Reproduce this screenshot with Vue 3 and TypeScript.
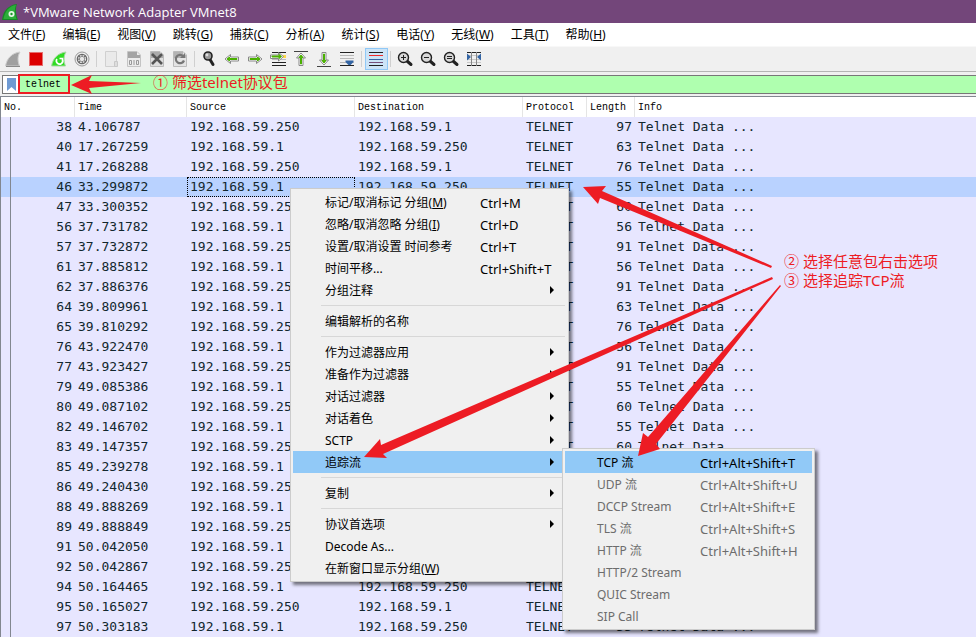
<script setup lang="ts">
interface Packet {
  no: number
  time: string
  fromGuest: boolean
  length: number
}

interface Entry {
  label?: string
  mnemonic?: string
  shortcut?: string
  submenu?: boolean
  active?: boolean
  disabled?: boolean
  separator?: boolean
}

const menus: [string, string][] = [
  ['文件', 'F'],
  ['编辑', 'E'],
  ['视图', 'V'],
  ['跳转', 'G'],
  ['捕获', 'C'],
  ['分析', 'A'],
  ['统计', 'S'],
  ['电话', 'Y'],
  ['无线', 'W'],
  ['工具', 'T'],
  ['帮助', 'H'],
]

const raw: [number, string, number][] = [
  [38, '4.106787', 97],
  [40, '17.267259', 63],
  [41, '17.268288', 76],
  [46, '33.299872', 55],
  [47, '33.300352', 60],
  [56, '37.731782', 56],
  [57, '37.732872', 91],
  [61, '37.885812', 56],
  [62, '37.886376', 91],
  [64, '39.809961', 63],
  [65, '39.810292', 76],
  [76, '43.922470', 56],
  [77, '43.923427', 91],
  [79, '49.085386', 55],
  [80, '49.087102', 60],
  [82, '49.146702', 55],
  [83, '49.147357', 60],
  [85, '49.239278', 55],
  [86, '49.240430', 60],
  [88, '49.888269', 55],
  [89, '49.888849', 60],
  [91, '50.042050', 55],
  [92, '50.042867', 60],
  [94, '50.164465', 55],
  [95, '50.165027', 60],
  [97, '50.303183', 55],
]
const host = '192.168.59.1'
const guest = '192.168.59.250'
const packets: Packet[] = raw.map(([no, time, length], i) => ({
  no,
  time,
  length,
  fromGuest: i % 2 === 0,
}))
const selected = 46

const contextEntries: Entry[] = [
  { label: '标记/取消标记 分组', mnemonic: 'M', shortcut: 'Ctrl+M' },
  { label: '忽略/取消忽略 分组', mnemonic: 'I', shortcut: 'Ctrl+D' },
  { label: '设置/取消设置 时间参考', shortcut: 'Ctrl+T' },
  { label: '时间平移...', shortcut: 'Ctrl+Shift+T' },
  { label: '分组注释', submenu: true },
  { separator: true },
  { label: '编辑解析的名称' },
  { separator: true },
  { label: '作为过滤器应用', submenu: true },
  { label: '准备作为过滤器', submenu: true },
  { label: '对话过滤器', submenu: true },
  { label: '对话着色', submenu: true },
  { label: 'SCTP', submenu: true },
  { label: '追踪流', submenu: true, active: true },
  { separator: true },
  { label: '复制', submenu: true },
  { separator: true },
  { label: '协议首选项', submenu: true },
  { label: 'Decode As...' },
  { label: '在新窗口显示分组', mnemonic: 'W' },
]

const streamEntries: Entry[] = [
  { label: 'TCP 流', shortcut: 'Ctrl+Alt+Shift+T', active: true },
  { label: 'UDP 流', shortcut: 'Ctrl+Alt+Shift+U', disabled: true },
  { label: 'DCCP Stream', shortcut: 'Ctrl+Alt+Shift+E', disabled: true },
  { label: 'TLS 流', shortcut: 'Ctrl+Alt+Shift+S', disabled: true },
  { label: 'HTTP 流', shortcut: 'Ctrl+Alt+Shift+H', disabled: true },
  { label: 'HTTP/2 Stream', disabled: true },
  { label: 'QUIC Stream', disabled: true },
  { label: 'SIP Call', disabled: true },
]

const popups = [
  { name: 'context', entries: contextEntries },
  { name: 'stream', entries: streamEntries },
]
</script>

<template>
  <main class="window">
    <header class="titlebar">
      <svg class="logo" viewBox="0 0 16 16">
        <path d="M0 16C1 7 6 1 15 0C13 5 14 11 16 16Z" fill="#168a26" />
        <path d="M1.500 15C3 7.500 7 2 14 1C12 6 13 11 14.500 15Z" fill="#2cae3a" />
        <circle cx="9.500" cy="10" r="3" fill="#e4f6e4" />
        <circle cx="9.500" cy="10" r="1.200" fill="#1c9a2b" />
      </svg>
      <h1>*VMware Network Adapter VMnet8</h1>
    </header>

    <nav class="menubar">
      <button v-for="[label, key] in menus" :key="key" type="button">{{ label }}(<u>{{ key }}</u>)</button>
    </nav>

    <div class="toolbar">
      <button type="button" aria-label="Start">
        <svg viewBox="0 0 18 18"><path d="M1.500 16C3 8 8 3 16 2C13.500 6 13.500 11 15.500 16Z" fill="#a0a0a0" stroke="#cfcfcf" /><path d="M2 16.500H16" stroke="#8a8a8a" /></svg>
      </button>
      <button type="button" aria-label="Stop">
        <svg viewBox="0 0 18 18"><rect x="2.500" y="2.500" width="13" height="13" fill="#dc0000" stroke="#e67070" /></svg>
      </button>
      <button type="button" aria-label="Restart">
        <svg viewBox="0 0 18 18"><path d="M1.500 16C3 8 8 3 16 2C13.500 6 13.500 11 15.500 16Z" fill="#2fdc22" stroke="#a7d8a2" /><path d="M7 9A3.200 3.200 0 1 0 12.500 9.500M12.500 12V8.500H9.500" fill="none" stroke="#fff" stroke-width="1.600" /></svg>
      </button>
      <button type="button" aria-label="Options">
        <svg viewBox="0 0 18 18"><circle cx="9" cy="9" r="7" fill="#eee" stroke="#999" /><circle cx="9" cy="9" r="5.300" fill="#686868" /><circle cx="9" cy="9" r="3.400" fill="none" stroke="#eee" stroke-width="1.300" stroke-dasharray="1.700 1" /><circle cx="9" cy="9" r="2.200" fill="#e8e8e8" /></svg>
      </button>
      <i class="rule"></i>
      <button type="button" aria-label="Open">
        <svg viewBox="0 0 18 18"><path d="M3.500 1.500H14.500V16.500H3.500Z" fill="#eaeaea" stroke="#d0d0d0" /><path d="M12.500 11.500H15.500V16.500H12.500Z" fill="#ddd" stroke="#c8c8c8" /></svg>
      </button>
      <button type="button" aria-label="Save">
        <svg viewBox="0 0 18 18"><path d="M2.500 1.500H12L15.500 5V16.500H2.500Z" fill="#ececec" stroke="#c4c4c4" /><path d="M3 2H12V5H15V8H3Z" fill="#a4a4a4" /><path d="M4.500 10.500H6.500V14.500H4.500ZM11.500 10.500H13.500V14.500H11.500ZM9 10V15" fill="none" stroke="#999" /></svg>
      </button>
      <button type="button" aria-label="Close file">
        <svg viewBox="0 0 18 18"><path d="M2.500 1.500H12L15.500 5V16.500H2.500Z" fill="#dedede" stroke="#bbb" /><path d="M3 2H12V5H15V8H3Z" fill="#aaa" /><path d="M4 4L14 14M14 4L4 14" stroke="#555" stroke-width="2.600" /></svg>
      </button>
      <button type="button" aria-label="Reload">
        <svg viewBox="0 0 18 18"><path d="M2.500 1.500H12L15.500 5V16.500H2.500Z" fill="#e4e4e4" stroke="#bbb" /><path d="M3 2H12V5H15V8H3Z" fill="#b4b4b4" /><path d="M12 6A4.200 4.200 0 1 0 13 10.500" fill="none" stroke="#777" stroke-width="2.200" /><path d="M9 8H14V3Z" fill="#777" /></svg>
      </button>
      <i class="rule"></i>
      <button type="button" aria-label="Find">
        <svg viewBox="0 0 18 18"><path d="M10 9.500L13 14.500" stroke="#222" stroke-width="3" stroke-linecap="round" /><circle cx="8" cy="6" r="4" fill="#999" stroke="#222" stroke-width="1.600" /><circle cx="7" cy="5" r="1.400" fill="#ddd" /></svg>
      </button>
      <button type="button" aria-label="Back">
        <svg viewBox="0 0 18 18"><path d="M2 9L7.500 4.500V7H15.500V11H7.500V13.500Z" fill="#fff" stroke="#888" /><path d="M4 9L6.500 7V8.500H14V9.500H6.500V11Z" fill="#4ab000" stroke="#4ab000" /></svg>
      </button>
      <button type="button" aria-label="Forward">
        <svg viewBox="0 0 18 18"><path d="M16 9L10.500 4.500V7H2.500V11H10.500V13.500Z" fill="#fff" stroke="#888" /><path d="M14 9L11.500 7V8.500H4V9.500H11.500V11Z" fill="#4ab000" stroke="#4ab000" /></svg>
      </button>
      <button type="button" aria-label="Go to packet">
        <svg viewBox="0 0 18 18"><path d="M3 2.500H17M3 12.500H17M3 15.500H17" stroke="#222" /><path d="M3 9.500H17" stroke="#bbb" /><rect x="14" y="5" width="3" height="3" fill="#ffd94a" /><path d="M14.500 6.500L9.500 2.500V5H1.500V8.500H9.500V11Z" fill="#fff" stroke="#888" /><path d="M12.500 6.500L10 4.500V6H3V7H10V8.500Z" fill="#4ab000" stroke="#4ab000" /></svg>
      </button>
      <button type="button" aria-label="First packet">
        <svg viewBox="0 0 18 18"><path d="M2 1.500H16" stroke="#444" /><path d="M9 3L13.500 8H11V15.500H7V8H4.500Z" fill="#fff" stroke="#888" /><path d="M9 5L11 7.500H9.500V14H8.500V7.500H7Z" fill="#4ab000" stroke="#4ab000" /></svg>
      </button>
      <button type="button" aria-label="Last packet">
        <svg viewBox="0 0 18 18"><path d="M2 16.500H16" stroke="#444" /><path d="M9 15L13.500 10H11V2.500H7V10H4.500Z" fill="#fff" stroke="#888" /><path d="M9 13L11 10.500H9.500V4H8.500V10.500H7Z" fill="#4ab000" stroke="#4ab000" /></svg>
      </button>
      <button type="button" aria-label="Auto scroll">
        <svg viewBox="0 0 18 18"><path d="M2 2.500H16M2 15.500H16" stroke="#222" /><path d="M2 5.500H16M2 8.500H16M2 12.500H16" stroke="#b8b8b8" /><path d="M7.500 10.500H15.500V12L12.500 15H10.500L7.500 12Z" fill="#3465a4" /></svg>
      </button>
      <i class="rule"></i>
      <button type="button" class="checked" aria-label="Colorize">
        <svg viewBox="0 0 18 18"><path d="M2 2.500H16M2 15.500H16" stroke="#222" /><path d="M2 5.500H16" stroke="#ef2929" /><path d="M2 9.500H16" stroke="#3465a4" /><path d="M2 12.500H16" stroke="#75507b" /></svg>
      </button>
      <i class="rule"></i>
      <button v-for="sign in ['+', '-', '=']" :key="sign" type="button" :aria-label="'Zoom ' + sign">
        <svg viewBox="0 0 18 18">
          <path d="M11 11L15 14.500" stroke="#222" stroke-width="3" stroke-linecap="round" />
          <circle cx="7.500" cy="7.500" r="5" fill="#d8d8d8" stroke="#222" stroke-width="1.400" />
          <path v-if="sign === '+'" d="M5 7.500H10M7.500 5V10" stroke="#222" />
          <path v-else-if="sign === '-'" d="M5 7.500H10" stroke="#222" />
          <path v-else d="M5 6.500H10M5 8.500H10" stroke="#222" />
        </svg>
      </button>
      <button type="button" aria-label="Resize columns">
        <svg viewBox="0 0 18 18"><path d="M2 2.500H16M2 15.500H16" stroke="#222" /><path d="M2 5.500H16M2 9.500H16M2 12.500H16" stroke="#c8c8c8" /><path d="M6.500 2V16M11.500 2V16" stroke="#888" /><path d="M2 3.500L6 7L2 10.500ZM16 3.500L12 7L16 10.500Z" fill="#3465a4" /></svg>
      </button>
    </div>

    <div class="filterbar">
      <button type="button" class="bookmark" aria-label="Bookmark">
        <svg viewBox="0 0 9 13"><path d="M0 0H9V13L4.500 9L0 13Z" fill="#6f9ad3" /></svg>
      </button>
      <input class="filter" value="telnet" aria-label="Display filter" />
      <div class="callout-filter">
        <span>① 筛选telnet协议包</span>
      </div>
    </div>

    <table class="packets">
      <colgroup>
        <col class="c-no" /><col class="c-time" /><col class="c-addr" /><col class="c-addr" /><col class="c-proto" /><col class="c-len" /><col />
      </colgroup>
      <thead>
        <tr>
          <th>No.</th><th>Time</th><th>Source</th><th>Destination</th><th>Protocol</th><th>Length</th><th>Info</th>
        </tr>
      </thead>
      <tbody>
        <tr v-for="p in packets" :key="p.no" :class="{ selected: p.no === selected }">
          <td class="num first">{{ p.no }}</td>
          <td>{{ p.time }}</td>
          <td class="source">{{ p.fromGuest ? guest : host }}</td>
          <td>{{ p.fromGuest ? host : guest }}</td>
          <td>TELNET</td>
          <td class="num">{{ p.length }}</td>
          <td>Telnet Data ...</td>
        </tr>
      </tbody>
    </table>

    <div v-for="popup in popups" :key="popup.name" class="popup" :class="popup.name" role="menu">
      <template v-for="(e, i) in popup.entries" :key="i">
        <hr v-if="e.separator" />
        <button v-else type="button" role="menuitem" :class="{ active: e.active }" :disabled="e.disabled">
          <span class="label">{{ e.label }}<template v-if="e.mnemonic">(<u>{{ e.mnemonic }}</u>)</template></span>
          <span v-if="e.shortcut" class="shortcut">{{ e.shortcut }}</span>
          <svg v-if="e.submenu" class="chevron" viewBox="0 0 4 8"><path d="M0 0L4 4L0 8Z" /></svg>
        </button>
      </template>
    </div>

    <p class="callout-steps">② 选择任意包右击选项<br />③ 选择追踪TCP流</p>

    <svg class="arrows" width="976" height="637" viewBox="0 0 976 637">
      <rect x="19" y="75" width="50" height="18" fill="none" stroke="#ed1c24" stroke-width="2" />
      <path d="M71 85L92 75L89 81L141 83L89 88L92 94Z" />
      <path d="M583 187L606 186L602 191L772 266L771 268L600 198L598 204Z" />
      <path d="M364 457L380 439L381 445L772 277L773 279L383 454L387 458Z" />
      <path d="M638 456L643 433L648 437L780 285L781 286L656 444L660 449Z" />
    </svg>
  </main>
</template>

<style>
body {
  margin: 0;
}
</style>

<style scoped>
.window {
  position: relative;
  height: 100vh;
  overflow: hidden;
  background: #f0f0f0;
  color: #000;
  font: 12px/16px "Noto Sans", "Noto Sans CJK SC", sans-serif;
}
button {
  border: 0;
  padding: 0;
  background: none;
  color: inherit;
  font: inherit;
}
.titlebar {
  display: flex;
  align-items: center;
  gap: 5px;
  height: 23px;
  padding-left: 2px;
  background: #73467a;
  color: #fff;
}
.logo {
  width: 16px;
  height: 16px;
}
h1 {
  margin: 0;
  font: 400 13px/20px "Open Sans", sans-serif;
}
.menubar {
  display: flex;
  gap: 17px;
  height: 23px;
  padding-left: 8px;
  background: #fff;
}
.menubar button {
  white-space: nowrap;
}
.toolbar {
  display: flex;
  align-items: center;
  height: 24px;
  padding-left: 2px;
  border-top: 1px solid #f8f8f8;
  border-bottom: 1px solid #b4b4b4;
}
.toolbar button {
  display: flex;
  align-items: center;
  box-sizing: border-box;
  width: 23px;
  height: 22px;
  padding-left: 2px;
  flex: none;
}
.toolbar svg {
  width: 18px;
  height: 18px;
}
.toolbar .checked {
  background: #cce4f7;
  box-shadow: inset 0 0 0 1px #90c8f6;
}
.rule {
  width: 1px;
  height: 16px;
  margin: 0 3px 0 2px;
  background: #d0d0d0;
}
.filterbar {
  display: flex;
  height: 17px;
  margin: 3px 0 2px 2px;
  border: 1px solid #777;
  border-right: 0;
  background: #afffaf;
  position: relative;
}
.bookmark {
  display: flex;
  align-items: center;
  justify-content: center;
  width: 16px;
  background: #fff;
}
.bookmark svg {
  width: 9px;
  height: 13px;
}
.filter {
  flex: 1;
  min-width: 0;
  border: 0;
  padding: 0 0 0 6px;
  outline: 0;
  background: transparent;
  font: 10px/16px "Liberation Mono", monospace;
}
.callout-filter {
  position: absolute;
  left: 150px;
  top: -4px;
  color: #ed1c24;
  font-size: 15px;
  line-height: 20px;
}
.packets {
  width: 100%;
  table-layout: fixed;
  border-collapse: separate;
  border-spacing: 0;
  border-top: 1px solid #828790;
  border-left: 1px solid #828790;
  background: #e7e6ff;
  color: #12272e;
  font: 13px/20px "DejaVu Sans Mono", monospace;
}
.c-no {
  width: 74px;
}
.c-time {
  width: 112px;
}
.c-addr {
  width: 168px;
}
.c-proto {
  width: 64px;
}
.c-len {
  width: 48px;
}
th,
td {
  height: 20px;
  padding: 0 0 0 3px;
  text-align: left;
  white-space: nowrap;
}
th {
  box-sizing: border-box;
  border-right: 1px solid #e5e5e5;
  background: #fff;
  color: #000;
  font: 10px/19px "Liberation Mono", monospace;
}
th:last-child {
  border-right: 0;
}
.num {
  padding-right: 3px;
  text-align: right;
}
.first {
  background: linear-gradient(#828790, #828790) 9px 0 / 1px 100% no-repeat;
}
.selected {
  background-color: #b9d2ff;
}
.selected .source {
  outline: 1px dotted #000;
  outline-offset: -1px;
}
.popup {
  position: absolute;
  display: flex;
  flex-direction: column;
  box-sizing: border-box;
  padding: 2px;
  border: 1px solid #ccc;
  background: #f0f0f0;
  box-shadow: 3px 3px 3px rgba(0, 0, 0, 0.5);
}
.context {
  left: 290px;
  top: 188px;
  width: 279px;
}
.stream {
  left: 562px;
  top: 448px;
  width: 253px;
}
.popup button {
  display: grid;
  grid-template-columns: 155px 1fr;
  align-items: center;
  box-sizing: border-box;
  height: 22px;
  padding: 2px 0 0 32px;
  text-align: left;
  white-space: nowrap;
}
.stream button {
  grid-template-columns: 103px 1fr;
}
.shortcut {
  font-size: 13px;
}
.popup .active {
  background: #91c9f7;
}
.popup button:disabled {
  color: #6d6d6d;
}
.chevron {
  justify-self: end;
  width: 4px;
  height: 8px;
  margin: 0 12px 2px 0;
}
hr {
  width: 244px;
  height: 1px;
  margin: 4px 0 4px 28px;
  border: 0;
  background: #d7d7d7;
}
.callout-steps {
  position: absolute;
  left: 784px;
  top: 252px;
  margin: 0;
  color: #ed1c24;
  font-size: 15px;
  line-height: 19px;
}
.arrows {
  position: absolute;
  left: 0;
  top: 0;
  fill: #ed1c24;
  pointer-events: none;
}
</style>
